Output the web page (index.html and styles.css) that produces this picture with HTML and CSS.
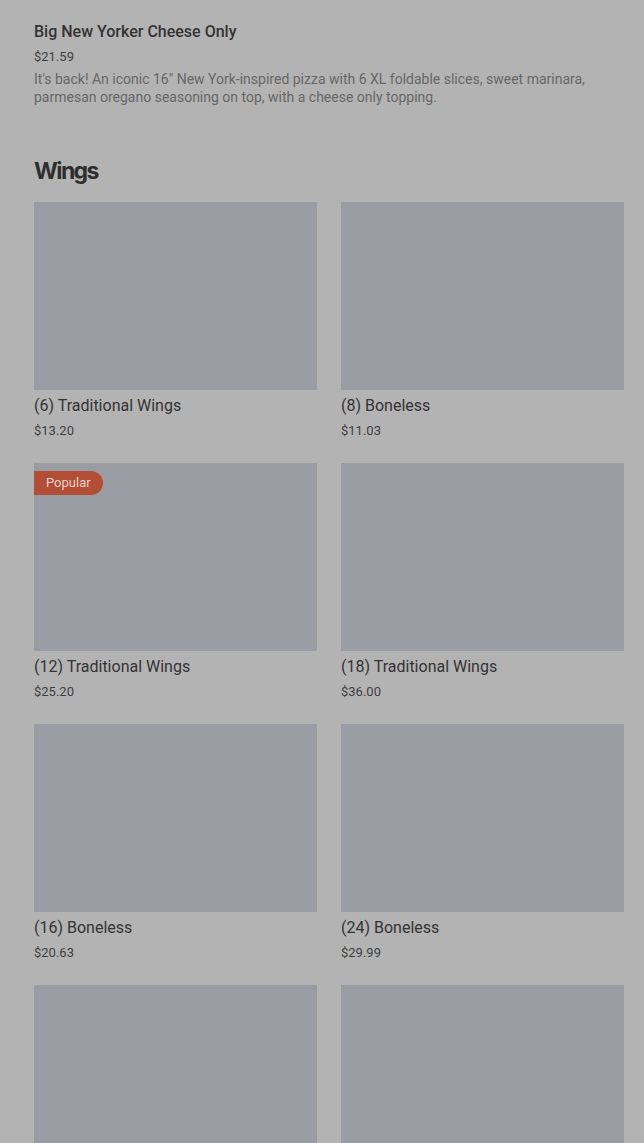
FILE: index.html
```html
<!DOCTYPE html>
<html lang="en">
<head>
  <meta charset="UTF-8">
  <title>Menu</title>
  <link rel="stylesheet" href="styles.css">
</head>
<body>
  <div class="item-top">
    <h3 class="item-title">Big New Yorker Cheese Only</h3>
    <div class="item-price">$21.59</div>
    <p class="item-desc">It's back! An iconic 16" New York-inspired pizza with 6 XL foldable slices, sweet marinara, parmesan oregano seasoning on top, with a cheese only topping.</p>
  </div>

  <h2 class="section-title">Wings</h2>

  <div class="grid">
    <div class="card">
      <div class="card-img"></div>
      <div class="card-title">(6) Traditional Wings</div>
      <div class="card-price">$13.20</div>
    </div>
    <div class="card">
      <div class="card-img"></div>
      <div class="card-title">(8) Boneless</div>
      <div class="card-price">$11.03</div>
    </div>
    <div class="card">
      <div class="card-img">
        <span class="badge">Popular</span>
      </div>
      <div class="card-title">(12) Traditional Wings</div>
      <div class="card-price">$25.20</div>
    </div>
    <div class="card">
      <div class="card-img"></div>
      <div class="card-title">(18) Traditional Wings</div>
      <div class="card-price">$36.00</div>
    </div>
    <div class="card">
      <div class="card-img"></div>
      <div class="card-title">(16) Boneless</div>
      <div class="card-price">$20.63</div>
    </div>
    <div class="card">
      <div class="card-img"></div>
      <div class="card-title">(24) Boneless</div>
      <div class="card-price">$29.99</div>
    </div>
    <div class="card">
      <div class="card-img"></div>
    </div>
    <div class="card">
      <div class="card-img"></div>
    </div>
  </div>
</body>
</html>
```

FILE: styles.css
```css
* {
  margin: 0;
  padding: 0;
  box-sizing: border-box;
}

html, body {
  height: 1143px;
  overflow: hidden;
}

body {
  font-family: Roboto, 'Noto Sans', sans-serif;
  background: #b3b3b3;
  color: #333;
  padding: 22px 20px 0 34px;
}

.item-title {
  font-size: 16px;
  line-height: 20px;
  font-weight: 500;
  color: #333;
}

.item-price {
  margin-top: 6px;
  font-size: 13px;
  line-height: 18px;
  color: #3f3f3f;
}

.item-desc {
  margin-top: 4px;
  font-size: 14px;
  line-height: 18px;
  color: #676767;
}

.section-title {
  margin-top: 50px;
  font-family: Inter, sans-serif;
  font-size: 23px;
  line-height: 30px;
  font-weight: 700;
  color: #2e2e2e;
  letter-spacing: -1.6px;
}

.grid {
  margin-top: 16px;
  display: grid;
  grid-template-columns: 283px 283px;
  column-gap: 24px;
  row-gap: 23px;
}

.card-img {
  position: relative;
  height: 188px;
  background: #999ca2;
}

.badge {
  position: absolute;
  top: 8px;
  left: 0;
  height: 24px;
  padding: 0 12px;
  line-height: 24px;
  font-size: 13px;
  color: #e6d2cc;
  background: #b24e35;
  border-radius: 0 12px 12px 0;
}

.card-title {
  margin-top: 6px;
  font-size: 16px;
  line-height: 20px;
  color: #333;
}

.card-price {
  margin-top: 6px;
  font-size: 13px;
  line-height: 18px;
  color: #3f3f3f;
}
```
